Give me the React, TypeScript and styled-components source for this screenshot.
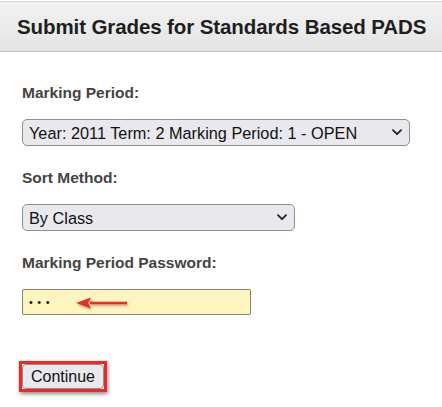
import React from "react";
import styled, { createGlobalStyle } from "styled-components";

const Global = createGlobalStyle`
  html, body { margin: 0; padding: 0; background: #fff; }
  body { font-family: "Liberation Sans", Arial, sans-serif; }
`;

const Page = styled.div`
  width: 442px;
  height: 407px;
  display: flex;
  flex-direction: column;
  overflow: hidden;
`;

const Header = styled.div`
  margin-top: 1px;
  height: 49px;
  display: flex;
  align-items: center;
  padding-left: 17px;
  border-top: 1px solid #d6d6d6;
  border-bottom: 1px solid #c4c4c4;
  background: linear-gradient(#f2f2f2, #e4e4e4);
  font-size: 20.5px;
  letter-spacing: -0.1px;
  font-weight: bold;
  color: #1e1e1e;
`;

const Form = styled.div`
  display: flex;
  flex-direction: column;
  align-items: flex-start;
  padding: 33px 0 0 22px;
`;

const Label = styled.div`
  font-size: 15.5px;
  font-weight: bold;
  color: #444;
  line-height: 16px;
  margin-bottom: 18px;
`;

const SelectWrap = styled.div<{ $w: number }>`
  position: relative;
  width: ${(p) => p.$w}px;
  height: 27px;
  margin-bottom: 24px;
`;

const Select = styled.select`
  appearance: none;
  width: 100%;
  height: 100%;
  box-sizing: border-box;
  border: 1px solid #8e8e96;
  border-radius: 5px;
  background: #e9e8ed;
  font-family: "Liberation Sans", Arial, sans-serif;
  font-size: 16.3px;
  color: #111;
  padding: 0 0 0 6px;
`;

const Chevron = styled.svg`
  position: absolute;
  right: 8px;
  top: 10px;
  pointer-events: none;
`;

const PassWrap = styled.div`
  position: relative;
  width: 229px;
  height: 26px;
`;

const Password = styled.input`
  width: 100%;
  height: 100%;
  box-sizing: border-box;
  border: 1px solid #8c8273;
  border-radius: 2px;
  background: #fdf5c0;
  font-family: "Liberation Sans", Arial, sans-serif;
  font-size: 11px;
  padding: 0 0 0 6px;
  letter-spacing: 4.5px;
  color: #111;
  outline: none;
`;

const Arrow = styled.svg`
  position: absolute;
  left: 54px;
  top: 7px;
  overflow: visible;
`;

const ButtonFrame = styled.div`
  margin: 46px 0 0 -3px;
  border: 3px solid #ec2a22;
  box-shadow: 1px 2px 4px rgba(0, 0, 0, 0.45);
  display: flex;
`;

const Button = styled.button`
  height: 25px;
  width: 82px;
  box-sizing: border-box;
  border: 1px solid #8e8e96;
  border-radius: 4px;
  background: #e9e8ed;
  font-family: "Liberation Sans", Arial, sans-serif;
  font-size: 16px;
  color: #111;
  padding: 0;
`;

const ChevronIcon = () => (
  <Chevron width="10" height="7" viewBox="0 0 10 7">
    <path d="M1 1.2 L5 5.2 L9 1.2" fill="none" stroke="#222" strokeWidth="1.8" strokeLinecap="round" strokeLinejoin="round" />
  </Chevron>
);

export default function App() {
  return (
    <Page>
      <Global />
      <Header>Submit Grades for Standards Based PADS</Header>
      <Form>
        <Label>Marking Period:</Label>
        <SelectWrap $w={388}>
          <Select defaultValue="a">
            <option value="a">Year: 2011 Term: 2 Marking Period: 1 - OPEN</option>
          </Select>
          <ChevronIcon />
        </SelectWrap>
        <Label>Sort Method:</Label>
        <SelectWrap $w={273}>
          <Select defaultValue="c">
            <option value="c">By Class</option>
          </Select>
          <ChevronIcon />
        </SelectWrap>
        <Label>Marking Period Password:</Label>
        <PassWrap>
          <Password type="password" defaultValue="abc" />
          <Arrow width="54" height="14" viewBox="0 0 54 14">
            <defs>
              <filter id="sh" x="-20%" y="-50%" width="140%" height="200%">
                <feDropShadow dx="1" dy="1.5" stdDeviation="1" floodColor="#000" floodOpacity="0.35" />
              </filter>
            </defs>
            <g filter="url(#sh)">
              <path d="M14 5.8 L51 5.8 L51 8.2 L14 8.2 Z" fill="#ee2b22" />
              <path d="M0 7 L15 1.5 L12 7 L15 12.5 Z" fill="#ee2b22" />
            </g>
          </Arrow>
        </PassWrap>
        <ButtonFrame>
          <Button>Continue</Button>
        </ButtonFrame>
      </Form>
    </Page>
  );
}
